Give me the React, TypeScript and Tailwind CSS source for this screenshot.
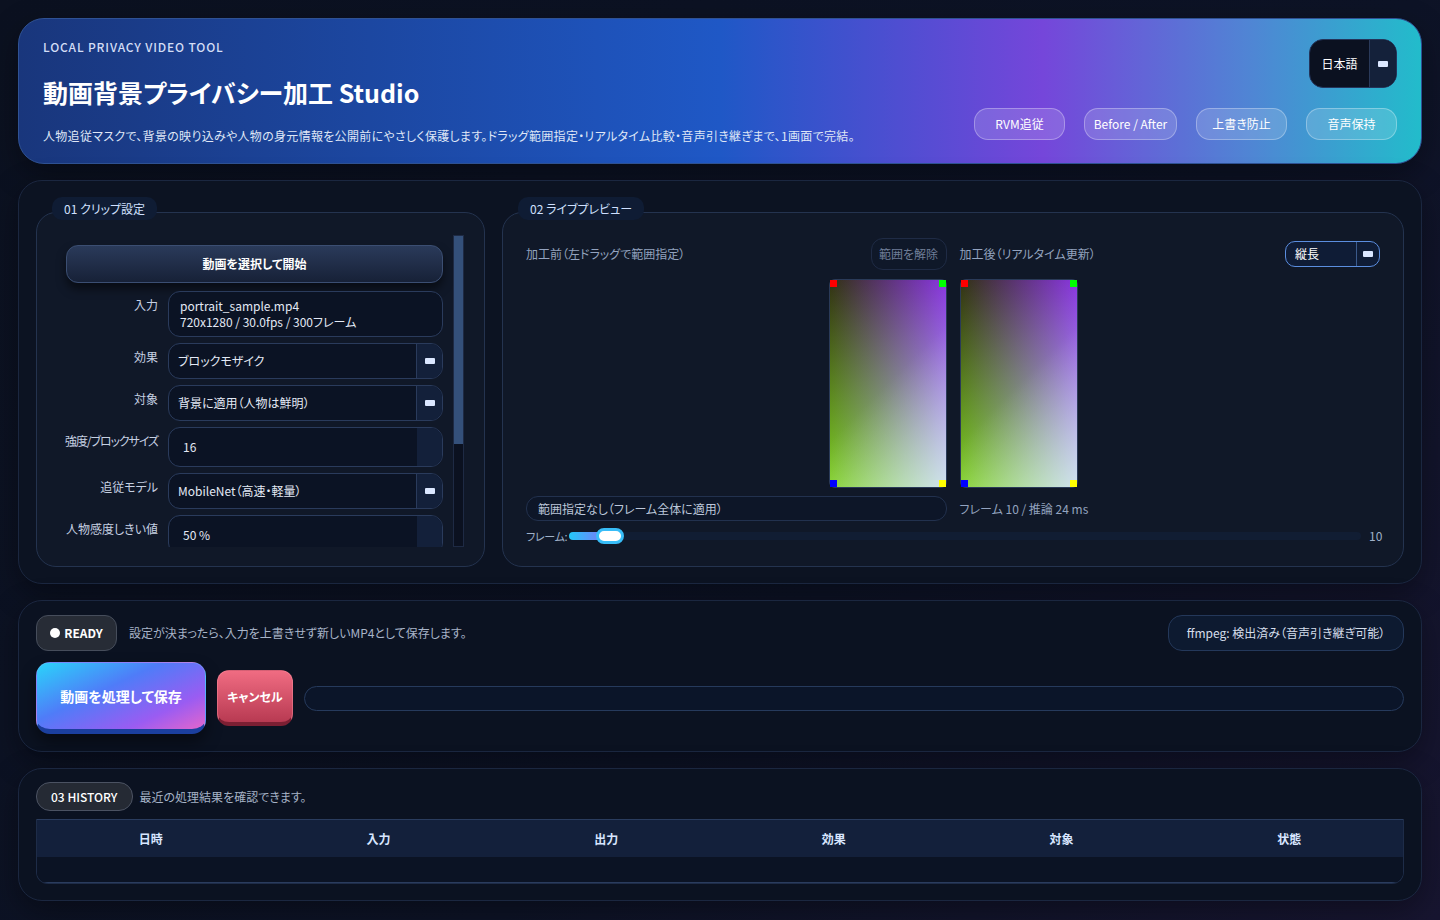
import React from "react";

const chips = [
  { label: "RVM追従", w: "w-[91px]" },
  { label: "Before / After", w: "w-[93px]" },
  { label: "上書き防止", w: "w-[91px]" },
  { label: "音声保持", w: "w-[91px]" },
];
const columns = ["日時", "入力", "出力", "効果", "対象", "状態"];

function Caret() {
  return <span className="block h-[6px] w-[10px] rounded-[1px] bg-[#dbe7ff]" />;
}

function SelectBox({ value }: { value: string }) {
  return (
    <div className="flex h-9 items-stretch overflow-hidden rounded-xl border border-[#2a3b5c] bg-[#0b1324]">
      <div className="flex flex-1 items-center pl-[9px] text-xs text-[#e3e9f5]">{value}</div>
      <div className="flex w-[26px] items-center justify-center border-l border-[#2a3b5c] bg-[#13203a]">
        <Caret />
      </div>
    </div>
  );
}

function NumberBox({ value }: { value: string }) {
  return (
    <div className="flex h-10 items-stretch overflow-hidden rounded-xl border border-[#2a3b5c] bg-[#0b1324]">
      <div className="flex flex-1 items-center pl-[14px] text-xs text-[#e3e9f5]">{value}</div>
      <div className="w-[25px] bg-[#13203a]" />
    </div>
  );
}

function Row({ label, tight, children }: { label: string; tight?: boolean; children: React.ReactNode }) {
  return (
    <div className="flex items-start gap-[10px]">
      <div
        className={
          "flex w-[92px] shrink-0 justify-end whitespace-nowrap pt-[6px] text-xs leading-4 text-[#c6d0e2] " +
          (tight ? "tracking-[-0.09em]" : "")
        }
      >
        {label}
      </div>
      <div className="min-w-0 flex-1">{children}</div>
    </div>
  );
}

function Card({ title, className, children }: { title: string; className?: string; children: React.ReactNode }) {
  return (
    <div className="relative min-w-0 pt-[15px]">
      <div className={"h-full rounded-[20px] border border-[#24334f] bg-[#101828] " + (className ?? "")}>{children}</div>
      <div className="absolute left-[16px] top-0 flex h-[23px] items-center rounded-[10px] bg-[#0f1c34] px-3 text-xs text-[#cfe0ff]">
        {title}
      </div>
    </div>
  );
}

function Preview() {
  return (
    <div className="relative h-[209px] w-[118px] rounded-md border border-[#2a3a58]">
      <div className="absolute inset-0 bg-[linear-gradient(to_bottom,#1a1a0a,#70cc1c),linear-gradient(to_right,#1a1a0a,#7c1fde),linear-gradient(135deg,#000_50%,#5a5a5a_100%)] bg-blend-screen" />
      <span className="absolute left-0 top-0 h-[7px] w-[7px] bg-[#ff0000]" />
      <span className="absolute right-0 top-0 h-[7px] w-[7px] bg-[#00ff00]" />
      <span className="absolute bottom-0 left-0 h-[7px] w-[7px] bg-[#0000ff]" />
      <span className="absolute bottom-0 right-0 h-[7px] w-[7px] bg-[#ffff00]" />
    </div>
  );
}

export default function App() {
  return (
    <div className="min-h-[920px] bg-[linear-gradient(135deg,#0b1120_0%,#0d1326_60%,#171530_100%)] px-[18px] pb-[19px] pt-[18px] font-['Noto_Sans_CJK_JP',sans-serif] text-white [font-feature-settings:'palt']">
      {/* header */}
      <header className="flex h-[146px] justify-between rounded-[26px] border border-[#2f5294] bg-[linear-gradient(90deg,#19367c_0%,#1f58c6_50%,#7546da_73%,#4f86d4_88%,#22bccb_100%)] pb-[23px] pl-[24px] pr-[24px] pt-[20px] shadow-[0_10px_30px_rgba(0,0,0,0.35)]">
        <div className="flex flex-col">
          <div className="text-xs font-medium leading-4 tracking-[0.07em] text-[#d3ddf5]">LOCAL PRIVACY VIDEO TOOL</div>
          <h1 className="mt-[19px] text-[25px] font-bold leading-9 text-white">動画背景プライバシー加工 Studio</h1>
          <p className="mt-[17px] text-xs leading-[18px] tracking-[0.025em] text-[#dfe6f6]">
            人物追従マスクで、背景の映り込みや人物の身元情報を公開前にやさしく保護します。ドラッグ範囲指定・リアルタイム比較・音声引き継ぎまで、1画面で完結。
          </p>
        </div>
        <div className="flex flex-col items-end justify-between">
          <div className="flex h-[49px] w-[88px] overflow-hidden rounded-[14px] border border-[#24345a] bg-[#0b1120]">
            <div className="flex flex-1 items-center justify-center text-xs text-white">日本語</div>
            <div className="flex w-[27px] items-center justify-center border-l border-[#2a3a5a] bg-[#14213a]">
              <Caret />
            </div>
          </div>
          <div className="flex gap-[19px]">
            {chips.map((c) => (
              <div
                key={c.label}
                className={"flex h-8 items-center justify-center whitespace-nowrap rounded-[14px] border border-white/30 bg-white/15 text-xs text-white " + c.w}
              >
                {c.label}
              </div>
            ))}
          </div>
        </div>
      </header>

      {/* panel 1 */}
      <section className="mt-4 grid h-[404px] grid-cols-[449px_1fr] gap-[17px] rounded-[24px] border border-[#1b2740] bg-[#0c1322] px-[17px] pb-[16px] pt-[16px] shadow-[0_10px_30px_rgba(0,0,0,0.35)]">
        <Card title="01 クリップ設定" className="flex pb-[19px] pl-[29px] pr-[20px] pt-[22px]">
          <div className="flex h-[312px] w-full gap-[10px]">
            <div className="flex min-w-0 flex-1 flex-col gap-[6px] overflow-x-visible overflow-y-clip pt-[10px]">
              <button className="mb-[2px] h-[38px] shrink-0 rounded-xl border border-[#3b4e72] bg-[linear-gradient(to_bottom,#2a3a5a,#172137)] text-xs font-bold text-white shadow-[0_6px_10px_rgba(0,0,0,0.5)]">
                動画を選択して開始
              </button>
              <Row label="入力">
                <div className="flex h-[46px] flex-col justify-center rounded-xl border border-[#2a3b5c] bg-[#0b1324] pl-[11px] text-xs leading-4 text-[#e3e9f5]">
                  <span>portrait_sample.mp4</span>
                  <span>720x1280 / 30.0fps / 300フレーム</span>
                </div>
              </Row>
              <Row label="効果">
                <SelectBox value="ブロックモザイク" />
              </Row>
              <Row label="対象">
                <SelectBox value="背景に適用（人物は鮮明）" />
              </Row>
              <Row label="強度/ブロックサイズ" tight>
                <NumberBox value="16" />
              </Row>
              <Row label="追従モデル">
                <SelectBox value="MobileNet（高速・軽量）" />
              </Row>
              <Row label="人物感度しきい値">
                <NumberBox value="50 %" />
              </Row>
            </div>
            <div className="w-[11px] shrink-0 border border-[#1e2a44] bg-[#0b1120]">
              <div className="h-[208px] bg-[#34507a]" />
            </div>
          </div>
        </Card>

        <Card title="02 ライブプレビュー" className="px-[23px] pb-[22px] pt-[25px]">
          <div className="grid grid-cols-2 gap-x-[13px]">
            <div className="flex flex-col">
              <div className="flex h-8 items-center justify-between">
                <span className="text-xs text-[#93a3bf]">加工前（左ドラッグで範囲指定）</span>
                <button className="h-8 w-[76px] rounded-xl border border-[#1f2b45] bg-[#0f1829] text-xs text-[#6f7e98]">範囲を解除</button>
              </div>
              <div className="mt-[9px] flex justify-end">
                <Preview />
              </div>
              <div className="mt-2 flex h-[25px] items-center rounded-xl border border-[#22314e] bg-[#0d1628] pl-[11px] text-xs text-[#bcc7da]">
                範囲指定なし（フレーム全体に適用）
              </div>
            </div>
            <div className="flex flex-col">
              <div className="flex h-8 items-center justify-between">
                <span className="text-xs text-[#93a3bf]">加工後（リアルタイム更新）</span>
                <div className="flex h-[26px] w-[95px] overflow-hidden rounded-[10px] border border-[#5b8ee0] bg-[#0f1c36]">
                  <div className="flex flex-1 items-center pl-[9px] text-xs text-white">縦長</div>
                  <div className="flex w-[23px] items-center justify-center border-l border-[#3b5a8c]">
                    <Caret />
                  </div>
                </div>
              </div>
              <div className="mt-[9px] flex">
                <Preview />
              </div>
              <div className="mt-2 flex h-[25px] items-center text-xs text-[#93a3bf]">フレーム 10 / 推論 24 ms</div>
            </div>
          </div>
          <div className="mt-[7px] flex h-4 items-center text-xs text-[#9fb0c8]">
            <span className="w-[43px] shrink-0 whitespace-nowrap text-[11px] tracking-tight">フレーム:</span>
            <div className="relative h-2 flex-1 rounded-full bg-[#111d33]">
              <div className="h-2 w-[34px] rounded-full bg-[linear-gradient(90deg,#22c8f8,#7a7af8)]" />
              <div className="absolute left-[27px] top-[-4px] h-4 w-[28px] rounded-full border-[3px] border-[#38bdf8] bg-white" />
            </div>
            <span className="ml-2 w-[11px] text-right">10</span>
          </div>
        </Card>
      </section>

      {/* panel 2 */}
      <section className="mt-4 flex h-[152px] flex-col gap-[11px] rounded-[24px] border border-[#1b2740] bg-[#0b1221] px-[17px] pt-[14px] shadow-[0_10px_30px_rgba(0,0,0,0.35)]">
        <div className="flex items-center">
          <div className="flex h-9 w-[81px] items-center justify-center gap-[4px] rounded-xl border border-[#464d5b] bg-[#272c36]">
            <span className="h-[10px] w-[10px] rounded-full bg-white" />
            <span className="text-xs font-bold text-white">READY</span>
          </div>
          <span className="ml-[12px] text-xs text-[#a8b4c8]">設定が決まったら、入力を上書きせず新しいMP4として保存します。</span>
          <div className="ml-auto flex h-9 w-[236px] items-center justify-center whitespace-nowrap rounded-[14px] border border-[#24385a] bg-[#0d1a30] text-xs text-[#d5deeb]">
            ffmpeg: 検出済み（音声引き継ぎ可能）
          </div>
        </div>
        <div className="flex items-center gap-[11px]">
          <button className="h-[72px] w-[170px] rounded-[14px] border border-b-[5px] border-[#7fb4ff]/40 border-b-[#1b3f9e] bg-[linear-gradient(155deg,#2ad4fa_0%,#4f7cf8_40%,#9a5cf2_75%,#e466cc_100%)] text-sm font-bold text-white shadow-[0_8px_16px_rgba(0,0,0,0.45)]">
            動画を処理して保存
          </button>
          <button className="h-14 w-[76px] rounded-xl border border-b-4 border-[#ff9aa8]/40 border-b-[#7c1f33] bg-[linear-gradient(to_bottom,#f06c82,#b83a52)] text-xs font-bold text-white">
            キャンセル
          </button>
          <div className="h-[25px] flex-1 rounded-full border border-[#263a5c] bg-[#0b1529]" />
        </div>
      </section>

      {/* panel 3 */}
      <section className="mt-4 flex h-[133px] flex-col rounded-[24px] border border-[#1b2740] bg-[#0b1221] px-[17px] pt-[13px] shadow-[0_10px_30px_rgba(0,0,0,0.35)]">
        <div className="flex items-center">
          <div className="flex h-[29px] items-center rounded-[14px] border border-[#4b5262] bg-[#252a34] px-[14px] text-xs font-medium text-white">
            03 HISTORY
          </div>
          <span className="ml-[7px] text-xs text-[#a6b2c6]">最近の処理結果を確認できます。</span>
        </div>
        <div className="mt-2 overflow-hidden rounded-b-xl border-x border-b border-[#1e2c48]">
          <div className="grid h-[38px] grid-cols-6 items-center border-t border-[#2a3c5e] bg-[#13203b]">
            {columns.map((c) => (
              <div key={c} className="text-center text-xs font-bold text-[#d8e6ff]">
                {c}
              </div>
            ))}
          </div>
          <div className="h-[26px] border-b border-[#2a3c5e] bg-[#0b1324]" />
        </div>
      </section>
    </div>
  );
}
